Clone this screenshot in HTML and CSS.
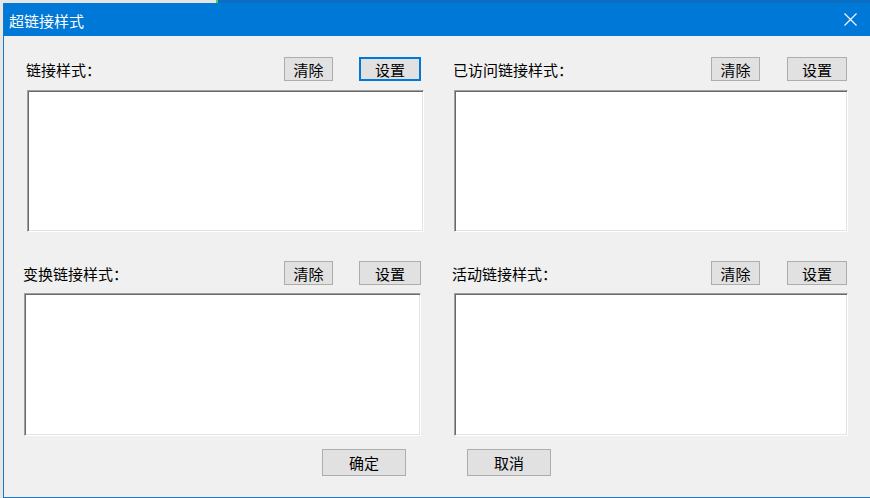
FILE: index.html
```html
<!DOCTYPE html>
<html lang="zh-CN">
<head>
<meta charset="utf-8">
<title>超链接样式</title>
<link rel="stylesheet" href="styles.css">
</head>
<body>
<div class="window">
  <div class="titlebar">
    <span class="title">超链接样式</span>
    <svg class="close" width="13" height="13" viewBox="0 0 13 13"><path d="M0.5 0.5 L12.5 12.5 M12.5 0.5 L0.5 12.5" stroke="#fff" stroke-width="1.1" fill="none"/></svg>
  </div>
  <div class="client">
    <div class="row row1">
      <div class="panel p1">
        <div class="head">
          <span class="label">链接样式：</span>
          <button class="btn clear">清除</button>
          <button class="btn set focus">设置</button>
        </div>
        <div class="box"></div>
      </div>
      <div class="panel p2">
        <div class="head">
          <span class="label">已访问链接样式：</span>
          <button class="btn clear">清除</button>
          <button class="btn set">设置</button>
        </div>
        <div class="box"></div>
      </div>
    </div>
    <div class="row row2">
      <div class="panel p3">
        <div class="head">
          <span class="label">变换链接样式：</span>
          <button class="btn clear">清除</button>
          <button class="btn set">设置</button>
        </div>
        <div class="box"></div>
      </div>
      <div class="panel p4">
        <div class="head">
          <span class="label">活动链接样式：</span>
          <button class="btn clear">清除</button>
          <button class="btn set">设置</button>
        </div>
        <div class="box"></div>
      </div>
    </div>
    <div class="footer">
      <button class="btn big">确定</button>
      <button class="btn big">取消</button>
    </div>
  </div>
</div>
</body>
</html>
```

FILE: styles.css
```css
* { box-sizing: border-box; }
html, body { margin: 0; padding: 0; }
body {
  width: 870px;
  height: 498px;
  overflow: hidden;
  background: linear-gradient(to right, #e6e6e6 0 216px, #3fd14a 216px 218px, #0a6fc1 218px);
  font-family: "Noto Sans CJK SC", "Microsoft YaHei", sans-serif;
  font-size: 15px;
  color: #000;
}
.window {
  margin: 3px 0 0 3px;
  height: 495px;
  width: 867px;
  background: #f0f0f0;
  border-left: 1px solid #1a78cc;
  border-bottom: 1px solid #1a78cc;
  display: flex;
  flex-direction: column;
}
.titlebar {
  height: 33px;
  flex: none;
  background: #0078d7;
  color: #fff;
  display: flex;
  align-items: center;
  justify-content: space-between;
  padding: 0 13px 0 5px;
}
.title { font-size: 15px; line-height: 1; padding-top: 1px; }
.close { display: block; }
.client { flex: 1; padding-top: 21px; }
.row { display: flex; }
.row2 { margin-top: 29px; }
.panel { display: flex; flex-direction: column; }
.head { height: 24px; display: flex; align-items: center; }
.label { flex: 1; line-height: 1; white-space: nowrap; }
.btn {
  font: inherit;
  font-size: 15px;
  line-height: 1;
  color: #000;
  background: #e1e1e1;
  border: 1px solid #adadad;
  padding: 0;
  margin: 0;
  height: 24px;
  display: flex;
  align-items: center;
  justify-content: center;
}
.btn.clear { width: 49px; }
.btn.focus { border-color: #0078d7; box-shadow: inset 0 0 0 1px #0078d7; }
.box {
  background: #fff;
  border: 1px solid;
  border-color: #a0a0a0 #ffffff #ffffff #a0a0a0;
  box-shadow: inset 1px 1px 0 #696969, inset -1px -1px 0 #e3e3e3;
}
.row1 .box { margin-top: 9px; height: 142px; }
.row2 .box { margin-top: 8px; height: 143px; }

.p1 { margin-left: 22px; width: 398px; }
.p1 .head { padding-right: 3px; }
.p1 .btn.set, .p3 .btn.set { width: 62px; margin-left: 26px; }
.p1 .box { margin-left: 1px; }

.p2 { margin-left: 29px; width: 395px; }
.p2 .head, .p4 .head { padding-right: 1px; }
.p2 .btn.set, .p4 .btn.set { width: 60px; margin-left: 27px; }
.p2 .box { margin-left: 1px; }

.p3 { margin-left: 19px; width: 398px; }
.p3 .box { margin-left: 1px; }

.p4 { margin-left: 31px; width: 396px; }
.p4 .box { margin-left: 2px; }

.footer {
  display: flex;
  gap: 61px;
  margin-top: 13px;
  padding-left: 318px;
}
.btn.big { width: 84px; height: 27px; }
```
